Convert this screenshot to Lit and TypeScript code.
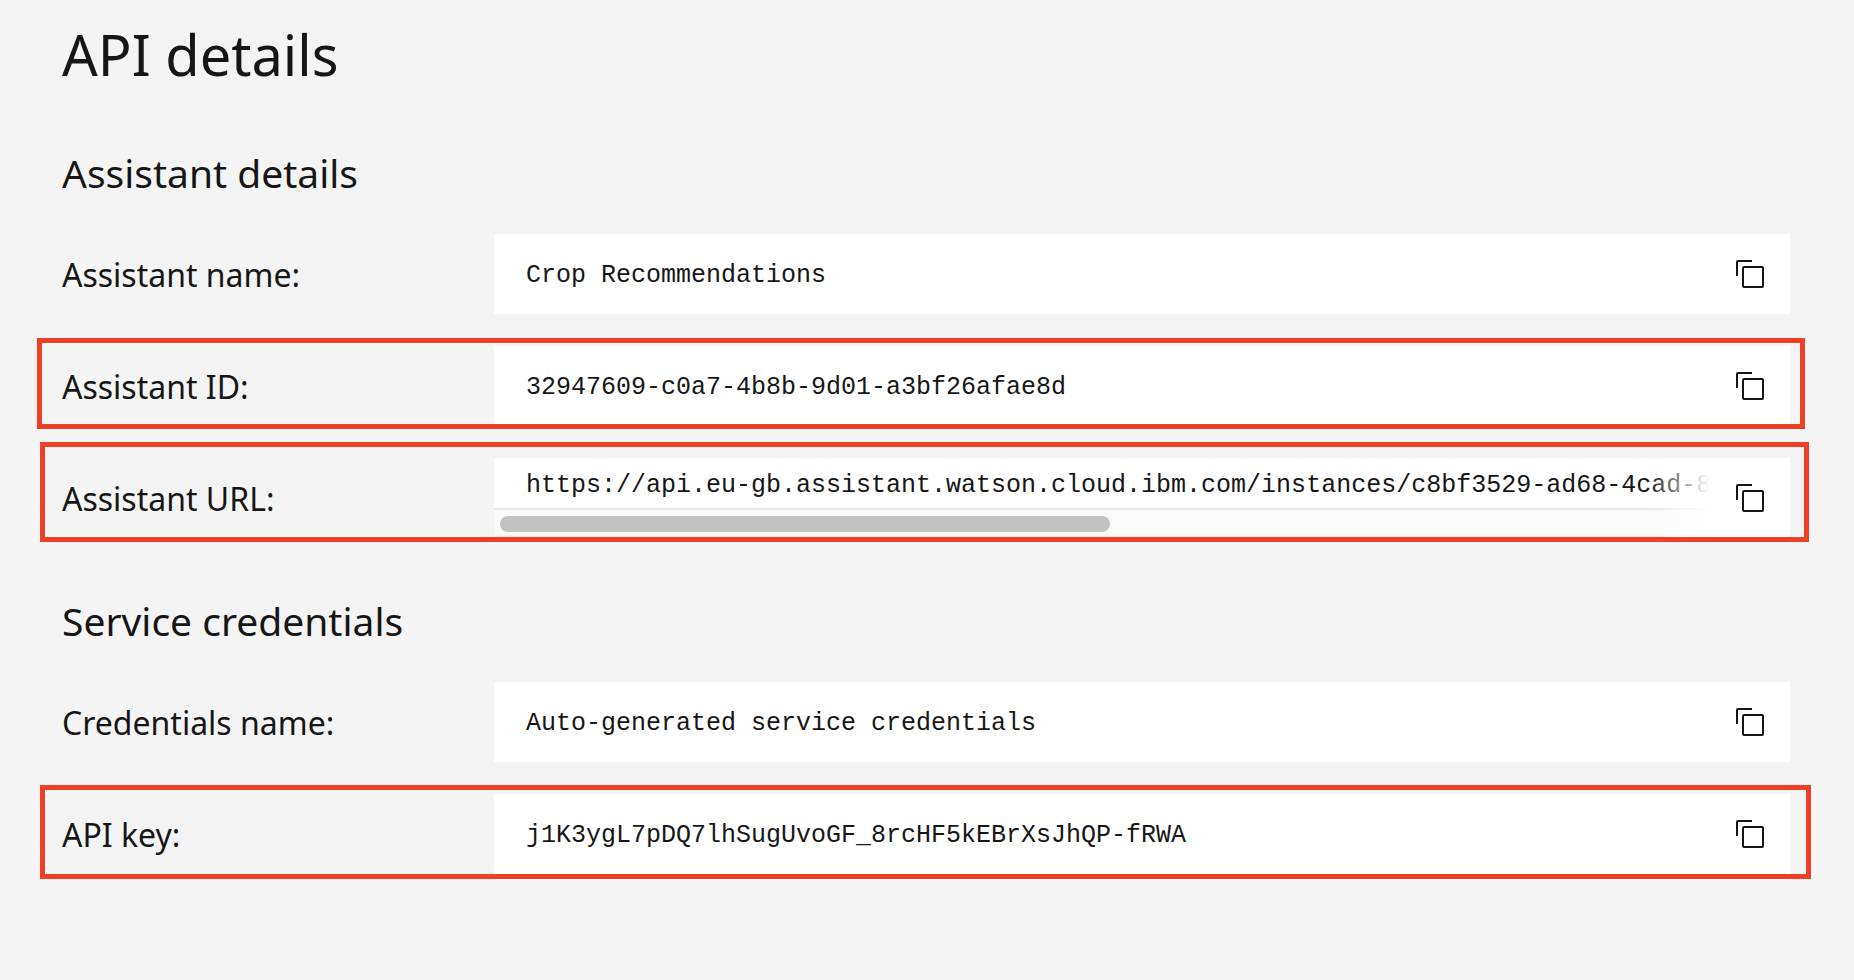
import { LitElement, html, css, nothing } from "lit";
import { customElement, property } from "lit/decorators.js";
import { classMap } from "lit/directives/class-map.js";

interface Detail {
  id: string;
  label: string;
  value: string;
  mark?: "id" | "url" | "key";
  scrolls?: boolean;
}

interface Section {
  title: string;
  details: Detail[];
}

const SECTIONS: Section[] = [
  {
    title: "Assistant details",
    details: [
      { id: "assistant-name", label: "Assistant name:", value: "Crop Recommendations" },
      {
        id: "assistant-id",
        label: "Assistant ID:",
        value: "32947609-c0a7-4b8b-9d01-a3bf26afae8d",
        mark: "id",
      },
      {
        id: "assistant-url",
        label: "Assistant URL:",
        value: "https://api.eu-gb.assistant.watson.cloud.ibm.com/instances/c8bf3529-ad68-4cad-8",
        mark: "url",
        scrolls: true,
      },
    ],
  },
  {
    title: "Service credentials",
    details: [
      {
        id: "credentials-name",
        label: "Credentials name:",
        value: "Auto-generated service credentials",
      },
      {
        id: "api-key",
        label: "API key:",
        value: "j1K3ygL7pDQ7lhSugUvoGF_8rcHF5kEBrXsJhQP-fRWA",
        mark: "key",
      },
    ],
  },
];

@customElement("copy-field")
export class CopyField extends LitElement {
  @property({ attribute: false }) detail!: Detail;

  static styles = css`
    :host {
      display: block;
    }
    .row {
      position: relative;
      display: grid;
      grid-template-columns: 432px minmax(0, 1fr);
      align-items: center;
    }
    .label {
      padding-top: 2px;
      font-size: 32px;
      line-height: 40px;
    }
    .field {
      display: grid;
      grid-template-columns: minmax(0, 1fr) 80px;
      min-height: 80px;
      background: #fff;
    }
    .viewport {
      position: relative;
      display: flex;
      flex-direction: column;
      justify-content: center;
      overflow: hidden;
    }
    .value {
      padding: 4px 0 0 32px;
      font-family: "Liberation Mono", monospace;
      font-size: 25px;
      line-height: 32px;
      white-space: nowrap;
    }
    .scrolls .viewport {
      justify-content: space-between;
    }
    .scrolls .value {
      padding-top: 6px;
      line-height: 44px;
    }
    .scrolls .viewport::after {
      content: "";
      position: absolute;
      inset: 0 0 0 auto;
      width: 64px;
      background: linear-gradient(to right, rgba(255, 255, 255, 0), #fff);
    }
    .track {
      padding: 6px;
      padding-bottom: 4px;
      background: #fafafa;
      border-top: 2px solid #e8e8e8;
      border-bottom: 2px solid #ededed;
    }
    .thumb {
      width: 610px;
      max-width: 51%;
      height: 16px;
      border-radius: 8px;
      background: #c1c1c1;
    }
    .copy {
      display: grid;
      place-items: center;
      padding: 0;
      border: 0;
      background: #fff;
      color: #161616;
      cursor: pointer;
    }
    .copy:focus-visible {
      outline: 2px solid #0f62fe;
      outline-offset: -2px;
    }
    .icon {
      display: block;
      width: 32px;
      height: 32px;
      fill: currentColor;
    }
    .mark {
      position: absolute;
      border: 5px solid #ee4026;
      pointer-events: none;
    }
    .mark-id {
      inset: -8px -15px -3px -25px;
    }
    .mark-url {
      inset: -16px -19px -4px -22px;
    }
    .mark-key {
      inset: -9px -21px -5px -22px;
    }
  `;

  private copy() {
    navigator.clipboard?.writeText(this.detail.value);
  }

  render() {
    const { id, label, value, mark, scrolls } = this.detail;
    return html`
      <div class=${classMap({ row: true, scrolls: !!scrolls })}>
        <label class="label" for=${id}>${label}</label>
        <div class="field">
          <div class="viewport">
            <output class="value" id=${id}>${value}</output>
            ${scrolls ? html`<div class="track"><div class="thumb"></div></div>` : nothing}
          </div>
          <button class="copy" type="button" aria-label="Copy" @click=${this.copy}>
            <svg class="icon" viewBox="0 0 32 32" aria-hidden="true">
              <path
                d="M28 10V28H10V10H28m0-2H10a2 2 0 0 0-2 2V28a2 2 0 0 0 2 2H28a2 2 0 0 0 2-2V10a2 2 0 0 0-2-2Z"
              />
              <path d="M4 18H2V4A2 2 0 0 1 4 2H18V4H4Z" />
            </svg>
          </button>
        </div>
        ${mark ? html`<div class="mark mark-${mark}"></div>` : nothing}
      </div>
    `;
  }
}

@customElement("app-root")
export class AppRoot extends LitElement {
  static styles = css`
    :host {
      display: block;
      box-sizing: border-box;
      min-height: 100vh;
      padding: 18px 64px 64px 62px;
      background: #f4f4f4;
      color: #161616;
      font-family: "Noto Sans", sans-serif;
    }
    .page {
      display: flex;
      flex-direction: column;
      gap: 59px;
    }
    .title,
    .heading {
      margin: 0;
      font-weight: 400;
    }
    .title {
      font-size: 56px;
      line-height: 72px;
    }
    .heading {
      margin-bottom: 37px;
      font-size: 39px;
      line-height: 48px;
    }
    .rows {
      display: flex;
      flex-direction: column;
      gap: 32px;
    }
  `;

  render() {
    return html`
      <main class="page">
        <h1 class="title">API details</h1>
        ${SECTIONS.map(
          (section) => html`
            <section>
              <h2 class="heading">${section.title}</h2>
              <div class="rows">
                ${section.details.map((d) => html`<copy-field .detail=${d}></copy-field>`)}
              </div>
            </section>
          `,
        )}
      </main>
    `;
  }
}
